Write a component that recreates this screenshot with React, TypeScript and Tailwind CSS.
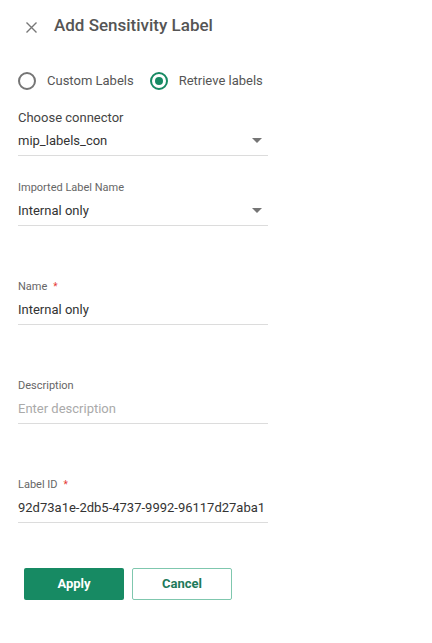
import React from "react";

const Caret = () => (
  <svg width="10" height="5" viewBox="0 0 10 5" className="shrink-0">
    <path d="M0 0 L10 0 L5 5 Z" fill="#757575" />
  </svg>
);

const Label = ({ text, req, size = "text-[11px] text-[#666]" }: { text: string; req?: boolean; size?: string }) => (
  <div className={`${size} h-[16px] leading-[16px] flex items-center`}>
    <span>{text}</span>
    {req && <span className="text-[#e53935] ml-[6px] text-[10px]">*</span>}
  </div>
);

const Field = ({
  label,
  value,
  req,
  dropdown,
  placeholder,
  labelSize,
  className = "",
}: {
  label: string;
  value: string;
  req?: boolean;
  dropdown?: boolean;
  placeholder?: boolean;
  labelSize?: string;
  className?: string;
}) => (
  <div className={className}>
    <Label text={label} req={req} size={labelSize} />
    <div
      className={`flex items-center justify-between h-[30px] pt-[1px] pb-[1px] border-b border-[#dcdcdc] text-[13px] whitespace-nowrap ${
        dropdown ? "pr-[6px]" : ""
      } ${placeholder ? "text-[#aaa]" : "text-[#333]"}`}
    >
      <span>{value}</span>
      {dropdown && <Caret />}
    </div>
  </div>
);

export default function App() {
  return (
    <div className="w-[432px] h-[643px] bg-white" style={{ fontFamily: "Roboto, 'Noto Sans', sans-serif" }}>
      <div className="flex items-center h-[20px] mt-[16px]">
        <svg width="11" height="11" viewBox="0 0 11 11" className="ml-[26px] mt-[3px]">
          <path d="M0.5 0.5 L10.5 10.5 M10.5 0.5 L0.5 10.5" stroke="#777" strokeWidth="1.4" />
        </svg>
        <div className="ml-[17px] text-[17px] font-medium text-[#555]">Add Sensitivity Label</div>
      </div>

      <div className="flex items-center mt-[35px] ml-[18px] h-[20px] text-[13px] text-[#555]">
        <div className="w-[18px] h-[18px] rounded-full border-2 border-[#757575]" />
        <span className="ml-[11px]">Custom Labels</span>
        <div className="ml-[16px] w-[18px] h-[18px] rounded-full border-2 border-[#178a63] flex items-center justify-center">
          <div className="w-[8px] h-[8px] rounded-full bg-[#178a63]" />
        </div>
        <span className="ml-[11px]">Retrieve labels</span>
      </div>

      <div className="ml-[18px] w-[250px]">
        <Field
          className="mt-[19px]"
          label="Choose connector"
          labelSize="text-[13px] text-[#444]"
          value="mip_labels_con"
          dropdown
        />
        <Field className="mt-[24px]" label="Imported Label Name" value="Internal only" dropdown />
        <Field className="mt-[53px]" label="Name" req value="Internal only" />
        <Field className="mt-[53px]" label="Description" value="Enter description" placeholder />
        <Field className="mt-[53px]" label="Label ID" req value="92d73a1e-2db5-4737-9992-96117d27aba1" />
      </div>

      <div className="flex ml-[24px] mt-[45px] gap-[8px]">
        <button className="w-[100px] h-[32px] rounded-[2px] bg-[#178a63] text-white text-[13px] font-bold">Apply</button>
        <button className="w-[100px] h-[32px] rounded-[2px] border border-[#7fc7ae] text-[#1e7a5a] text-[13px] font-bold bg-white">
          Cancel
        </button>
      </div>
    </div>
  );
}
